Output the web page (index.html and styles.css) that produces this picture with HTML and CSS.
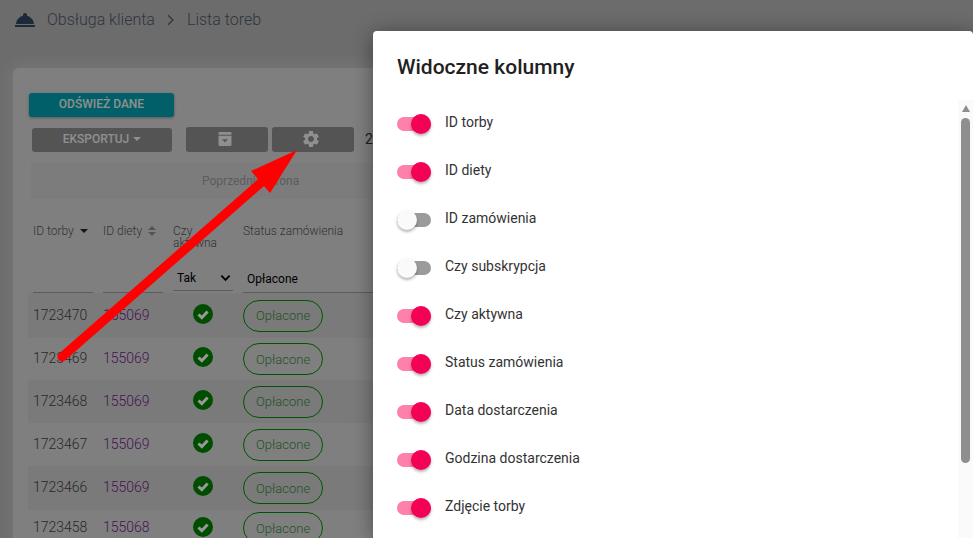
FILE: index.html
```html
<!DOCTYPE html>
<html lang="pl">
<head>
<meta charset="utf-8">
<title>Lista toreb</title>
<link rel="stylesheet" href="styles.css">
</head>
<body>
<div class="page">
  <nav class="crumbs">
    <svg class="bell" viewBox="0 0 24 24"><path d="M2 17h20v2H2zm11.84-9.21c.1-.24.16-.51.16-.79 0-1.1-.9-2-2-2s-2 .9-2 2c0 .28.06.55.16.79C6.25 8.6 3.27 11.93 3.02 16h17.96c-.25-4.07-3.23-7.4-7.14-8.21z"/></svg>
    <span>Obsługa klienta</span>
    <svg class="chev" viewBox="0 0 10 14"><path d="M2 2.2 7 7 2 11.8"/></svg>
    <span>Lista toreb</span>
  </nav>
  <main class="card">
    <button class="refresh">ODŚWIEŻ DANE</button>
    <div class="tools">
      <button class="gray export">EKSPORTUJ <i class="caret"></i></button>
      <button class="gray icon first"><svg class="box" viewBox="0 0 14 14"><path fill-rule="evenodd" d="M1.6 0h10.8c.6 0 1.1.5 1.1 1.1V2.8H.5V1.1C.5.5 1 0 1.6 0zM.5 3.8h13v9c0 .7-.5 1.2-1.2 1.2H1.700c-.7 0-1.200-.5-1.200-1.200zM4 7.300 7 10.300 10 7.300z"/></svg></button>
      <button class="gray icon"><svg viewBox="0 0 24 24"><path d="M19.14 12.94c.04-.3.06-.61.06-.94 0-.32-.02-.64-.07-.94l2.03-1.58c.18-.14.23-.41.12-.61l-1.92-3.32c-.12-.22-.37-.29-.59-.22l-2.39.96c-.5-.38-1.03-.7-1.62-.94l-.36-2.54c-.04-.24-.24-.41-.48-.41h-3.84c-.24 0-.43.17-.47.41l-.36 2.54c-.59.24-1.13.57-1.62.94l-2.39-.96c-.22-.08-.47 0-.59.22L2.74 8.87c-.12.21-.08.47.12.61l2.03 1.58c-.05.3-.09.63-.09.94s.02.64.07.94l-2.03 1.58c-.18.14-.23.41-.12.61l1.92 3.32c.12.22.37.29.59.22l2.39-.96c.5.38 1.03.7 1.62.94l.36 2.54c.05.24.24.41.48.41h3.84c.24 0 .44-.17.47-.41l.36-2.54c.59-.24 1.13-.56 1.62-.94l2.39.96c.22.08.47 0 .59-.22l1.92-3.32c.12-.22.07-.47-.12-.61l-2.01-1.58zM12 15.6c-1.98 0-3.6-1.62-3.6-3.6s1.62-3.6 3.6-3.6 3.6 1.62 3.6 3.6-1.62 3.6-3.6 3.6z"/></svg></button>
      <span class="count">20</span>
    </div>
    <div class="prev">Poprzednia strona</div>
    <div class="grid head">
      <div class="th"><span>ID torby</span><i class="sort-down"></i></div>
      <div class="th"><span>ID diety</span><svg class="sort-both" viewBox="0 0 8 10"><path d="M4 0 8 4H0zM4 10 0 6h8z"/></svg></div>
      <div class="th narrow">Czy aktywna</div>
      <div class="th">Status zamówienia</div>
    </div>
    <div class="grid filters">
      <div class="f"></div>
      <div class="f"></div>
      <div class="f select">Tak<svg viewBox="0 0 12 8"><path d="M1.500 1.500 6 6l4.500-4.500"/></svg></div>
      <div class="f status">Opłacone</div>
    </div>
    <div class="grid row odd h45"><div class="val">1723470</div><a class="val">155069</a><div class="ok"><svg viewBox="0 0 20 20"><circle cx="10" cy="10" r="10"/><path d="M5.500 10.500 8.800 13.700 14.600 7.400"/></svg></div><div><span class="pill">Opłacone</span></div></div>
    <div class="grid row h42"><div class="val">1723469</div><a class="val">155069</a><div class="ok"><svg viewBox="0 0 20 20"><circle cx="10" cy="10" r="10"/><path d="M5.500 10.500 8.800 13.700 14.600 7.400"/></svg></div><div><span class="pill">Opłacone</span></div></div>
    <div class="grid row odd"><div class="val">1723468</div><a class="val">155069</a><div class="ok"><svg viewBox="0 0 20 20"><circle cx="10" cy="10" r="10"/><path d="M5.500 10.500 8.800 13.700 14.600 7.400"/></svg></div><div><span class="pill">Opłacone</span></div></div>
    <div class="grid row"><div class="val">1723467</div><a class="val">155069</a><div class="ok"><svg viewBox="0 0 20 20"><circle cx="10" cy="10" r="10"/><path d="M5.500 10.500 8.800 13.700 14.600 7.400"/></svg></div><div><span class="pill">Opłacone</span></div></div>
    <div class="grid row odd h44"><div class="val">1723466</div><a class="val">155069</a><div class="ok"><svg viewBox="0 0 20 20"><circle cx="10" cy="10" r="10"/><path d="M5.500 10.500 8.800 13.700 14.600 7.400"/></svg></div><div><span class="pill">Opłacone</span></div></div>
    <div class="grid row h37"><div class="val">1723458</div><a class="val">155068</a><div class="ok"><svg viewBox="0 0 20 20"><circle cx="10" cy="10" r="10"/><path d="M5.500 10.500 8.800 13.700 14.600 7.400"/></svg></div><div class="pillcell"><span class="pill">Opłacone</span></div></div>
  </main>
</div>
<div class="backdrop"></div>
<svg class="arrow" viewBox="0 0 973 538"><path class="shaft" d="M62 357 272 173"/><path class="head-tip" d="M297 150 251 171 270 193z"/></svg>
<section class="modal">
  <h2>Widoczne kolumny</h2>
  <ul class="cols">
    <li><span class="sw on"><i></i></span>ID torby</li>
    <li><span class="sw on"><i></i></span>ID diety</li>
    <li><span class="sw"><i></i></span>ID zamówienia</li>
    <li><span class="sw"><i></i></span>Czy subskrypcja</li>
    <li><span class="sw on"><i></i></span>Czy aktywna</li>
    <li><span class="sw on"><i></i></span>Status zamówienia</li>
    <li><span class="sw on"><i></i></span>Data dostarczenia</li>
    <li><span class="sw on"><i></i></span>Godzina dostarczenia</li>
    <li><span class="sw on"><i></i></span>Zdjęcie torby</li>
  </ul>
  <div class="scrollbar"><i class="up"></i><i class="thumb"></i></div>
</section>
</body>
</html>
```
FILE: styles.css
```css
* { box-sizing: border-box; }
html, body { margin: 0; height: 100%; overflow: hidden; }
body { width: 973px; height: 538px; position: relative; font-family: Roboto, sans-serif; background: #b4b4b4; color: #212121; }
.page { padding: 0 0 0 13px; height: 538px; overflow: hidden; }
.crumbs { display: flex; align-items: center; height: 39px; color: #505a68; font-size: 16px; font-weight: 300; }
.bell { width: 24px; height: 24px; margin: 1px 10px 0 0; fill: #2c4660; }
.chev { width: 10px; height: 14px; margin: 0 11px; fill: none; stroke: #505a68; stroke-width: 1.3; }
.card { margin-top: 29px; width: 700px; height: 500px; background: #d4d4d4; border-radius: 6px 0 0 0; padding: 25px 0 0 16px; box-shadow: 0 0 18px 3px rgba(255,255,255,.25); }
button { font-family: Roboto, sans-serif; border: 0; border-radius: 3px; font-size: 12px; font-weight: 500; color: #eee; display: flex; align-items: center; justify-content: center; padding: 0; }
.refresh { width: 145px; height: 24px; background: #009fad; box-shadow: 0 1px 3px rgba(0,0,0,.3); padding-bottom: 2px; }
.tools { display: flex; align-items: flex-end; margin-top: 9px; height: 26px; }
.gray { background: #8c8c8c; height: 25px; }
.export { width: 140px; margin-left: 3px; height: 24px; gap: 4px; padding-bottom: 2px; }
.caret { border: 4px solid transparent; border-top-color: #eee; border-bottom: 0; width: 0; height: 0; }
.icon { width: 82px; padding: 0 4px 2px 0; }
.icon svg { width: 20px; height: 20px; fill: #eee; }
.icon .box { width: 14px; height: 14px; }
.first { margin-left: 14px; margin-right: 4px; }
.count { margin-left: 11px; font-size: 14px; color: #333; align-self: center; }
.prev { margin-top: 11px; width: 600px; height: 36px; margin-left: 2px; background: #cfcfcf; color: #999; font-size: 12px; display: flex; align-items: center; padding-left: 171px; }
.grid { display: grid; grid-template-columns: 60px 60px 60px 130px; column-gap: 10px; padding-left: 4px; width: 360px; }
.head { margin-top: 26px; height: 44px; font-size: 12px; font-weight: 300; color: #555; }
.th { display: flex; align-items: flex-start; gap: 6px; line-height: 12px; }
.th span { white-space: nowrap; }
.narrow { display: block; }
.sort-down { margin-top: 4px; border: 4px solid transparent; border-top-color: #222; border-bottom: 0; }
.sort-both { width: 8px; height: 10px; margin-top: 1px; fill: #8a8a8a; flex: none; }
.filters { height: 24px; font-size: 12px; color: #000; }
.f { border-bottom: 1px solid #999; height: 24px; display: flex; align-items: center; padding-bottom: 4px; }
.select { height: 22px; justify-content: space-between; padding: 0 2px 4px 4px; }
.select svg { width: 11px; height: 8px; fill: none; stroke: #000; stroke-width: 2; }
.status { padding-left: 4px; width: 200px; }
.row { height: 43px; align-items: center; font-size: 14px; font-weight: 300; color: #444; margin-left: -1px; padding-left: 5px; width: 345px; }
.row.odd { background: #cbcbcb; }
.h45 { height: 45px; }
.h44 { height: 44px; }
.h42 { height: 42px; }
.h37 { height: 37px; align-items: flex-start; }
.val { margin-bottom: 2px; }
.h37 .val { margin: 9px 0 0; }
.h37 .ok { margin: 7px 0 0; }
.h37 .pillcell { margin-top: 2px; }
.row a { color: #771e8e; }
.ok { display: flex; justify-content: center; margin-bottom: 4px; }
.ok svg { width: 20px; height: 20px; }
.ok circle { fill: #008000; }
.ok path { fill: none; stroke: #fff; stroke-width: 3; }
.pill { display: inline-flex; align-items: center; justify-content: center; width: 80px; height: 32px; border: 1px solid #009000; border-radius: 16px; font-size: 13px; color: #3d8a3d; vertical-align: middle; }
.backdrop { position: absolute; inset: 0; background: rgba(0,0,0,.4); }
.arrow { position: absolute; left: 0; top: 0; width: 973px; height: 538px; }
.shaft { stroke: #f00; stroke-width: 9; stroke-linecap: round; fill: none; }
.head-tip { fill: #f00; }
.modal { position: absolute; left: 373px; top: 31px; width: 600px; height: 507px; background: #fff; border-radius: 4px 4px 0 0; box-shadow: 0 2px 20px rgba(0,0,0,.4); }
.modal h2 { margin: 0; padding: 24px 24px 0; font-size: 21px; font-weight: 500; line-height: 24px; color: #212121; }
.cols { list-style: none; margin: 19px 0 0; padding: 0 0 0 24px; }
.cols li { height: 48px; display: flex; align-items: center; gap: 14px; font-size: 14px; color: #333; }
.sw { position: relative; width: 34px; height: 14px; margin-top: 4px; border-radius: 7px; background: #9b9b9b; flex: none; }
.sw i { position: absolute; left: 0; top: -3px; width: 20px; height: 20px; border-radius: 50%; background: #fafafa; box-shadow: 0 2px 3px rgba(0,0,0,.3); }
.sw.on { background: #ff80ab; }
.sw.on i { left: 14px; background: #f50057; }
.scrollbar { position: absolute; right: 0; top: 69px; bottom: 0; width: 15px; background: #fafafa; display: flex; flex-direction: column; align-items: center; }
.up { margin-top: 5px; border: 4.5px solid transparent; border-bottom: 7px solid #8e8e8e; border-top: 0; }
.thumb { margin-top: 6px; width: 9px; height: 345px; border-radius: 5px; background: #8e8e8e; }
```
